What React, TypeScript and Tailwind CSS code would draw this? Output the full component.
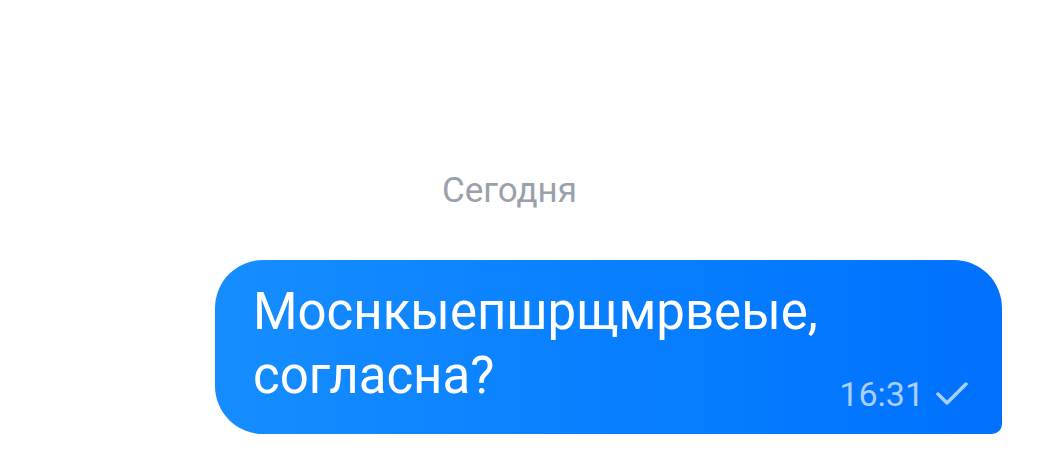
export default function App() {
  return (
    <div className="w-[1043px] h-[462px] bg-white overflow-hidden" style={{ fontFamily: "Roboto, 'Noto Sans', sans-serif" }}>
      <div className="pt-[171px] pl-[442px]">
        <div className="text-[35px] leading-[40px] text-[#9aa1aa]">Сегодня</div>
      </div>
      <div className="pl-[215px] pt-[49px]">
        <div className="relative w-[787px] h-[174px] rounded-tl-[48px] rounded-tr-[48px] rounded-bl-[48px] rounded-br-[10px] bg-gradient-to-r from-[#168dff] to-[#0071ff]">
          <div className="pl-[38px] pt-[20px] text-white text-[51px] leading-[64px]">
            Моснкыепшрщмрвеые,<br />согласна?
          </div>
          <div className="absolute right-[34px] bottom-[20px] flex items-center gap-[12px] text-[#a8cfff]">
            <span className="text-[34px] leading-[40px]">16:31</span>
            <svg width="32" height="26" viewBox="0 0 32 26" fill="none">
              <path d="M2 13 L11 22 L30 3" stroke="#a8cfff" strokeWidth="3.5" strokeLinecap="round" strokeLinejoin="round" />
            </svg>
          </div>
        </div>
      </div>
    </div>
  );
}
